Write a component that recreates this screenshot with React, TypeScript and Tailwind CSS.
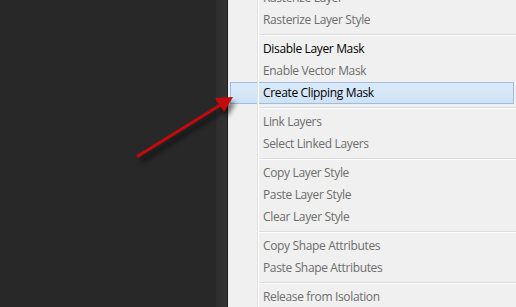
import React from "react";

type Item = { label?: string; enabled?: boolean; hl?: boolean; sep?: boolean };

const items: Item[] = [
  { label: "Rasterize Layer" },
  { label: "Rasterize Layer Style" },
  { sep: true },
  { label: "Disable Layer Mask", enabled: true },
  { label: "Enable Vector Mask" },
  { label: "Create Clipping Mask", enabled: true, hl: true },
  { sep: true },
  { label: "Link Layers" },
  { label: "Select Linked Layers" },
  { sep: true },
  { label: "Copy Layer Style" },
  { label: "Paste Layer Style" },
  { label: "Clear Layer Style" },
  { sep: true },
  { label: "Copy Shape Attributes" },
  { label: "Paste Shape Attributes" },
  { sep: true },
  { label: "Release from Isolation" },
];

export default function App() {
  return (
    <div
      className="relative flex h-[307px] w-[516px] overflow-hidden bg-[#282828]"
      style={{ fontFamily: '"Open Sans", "Noto Sans", sans-serif' }}
    >
      <div className="w-[216px] shrink-0" />
      <div className="w-[11px] shrink-0 bg-gradient-to-r from-[#2e2e2e] to-[#353535]" />
      <div className="w-px shrink-0 bg-[#1c1c1c]" />
      <div className="relative flex-1 bg-[#f0f0f0]">
        <div className="absolute bottom-0 left-[29px] top-0 w-px bg-[#e2e2e2]" />
        <div className="absolute bottom-0 left-[30px] top-0 w-px bg-white" />
        <div className="-mt-[13px] flex flex-col">
          {items.map((it, i) =>
            it.sep ? (
              <div key={i} className="flex h-[7px] flex-col justify-center pl-[30px]">
                <div className="h-px bg-[#dcdcdc]" />
                <div className="h-px bg-white" />
              </div>
            ) : (
              <div
                key={i}
                className={
                  "mx-[2px] flex h-[22px] items-center border pl-[32px] text-[12px] tracking-[-0.35px] " +
                  (it.hl
                    ? "border-[#99bde3] bg-gradient-to-b from-[#dbeaf8] to-[#cfe2f6] "
                    : "border-transparent ") +
                  (it.enabled ? "text-black" : "text-[#6d6d6d]")
                }
              >
                {it.label}
              </div>
            )
          )}
        </div>
      </div>
      <svg className="pointer-events-none absolute left-0 top-0" width="516" height="307">
        <defs>
          <filter id="sh" x="-20%" y="-20%" width="140%" height="140%">
            <feGaussianBlur stdDeviation="2.5" />
          </filter>
        </defs>
        <g transform="translate(3,5)" opacity="0.55" filter="url(#sh)">
          <line x1="138" y1="156" x2="222" y2="104" stroke="#000" strokeWidth="4" />
          <polygon points="233,97 215,98 224,112" fill="#000" />
        </g>
        <line x1="138" y1="156" x2="222" y2="104" stroke="#c40a0a" strokeWidth="3" strokeLinecap="round" />
        <polygon points="233,97 215,98 224,112" fill="#c40a0a" />
      </svg>
    </div>
  );
}
